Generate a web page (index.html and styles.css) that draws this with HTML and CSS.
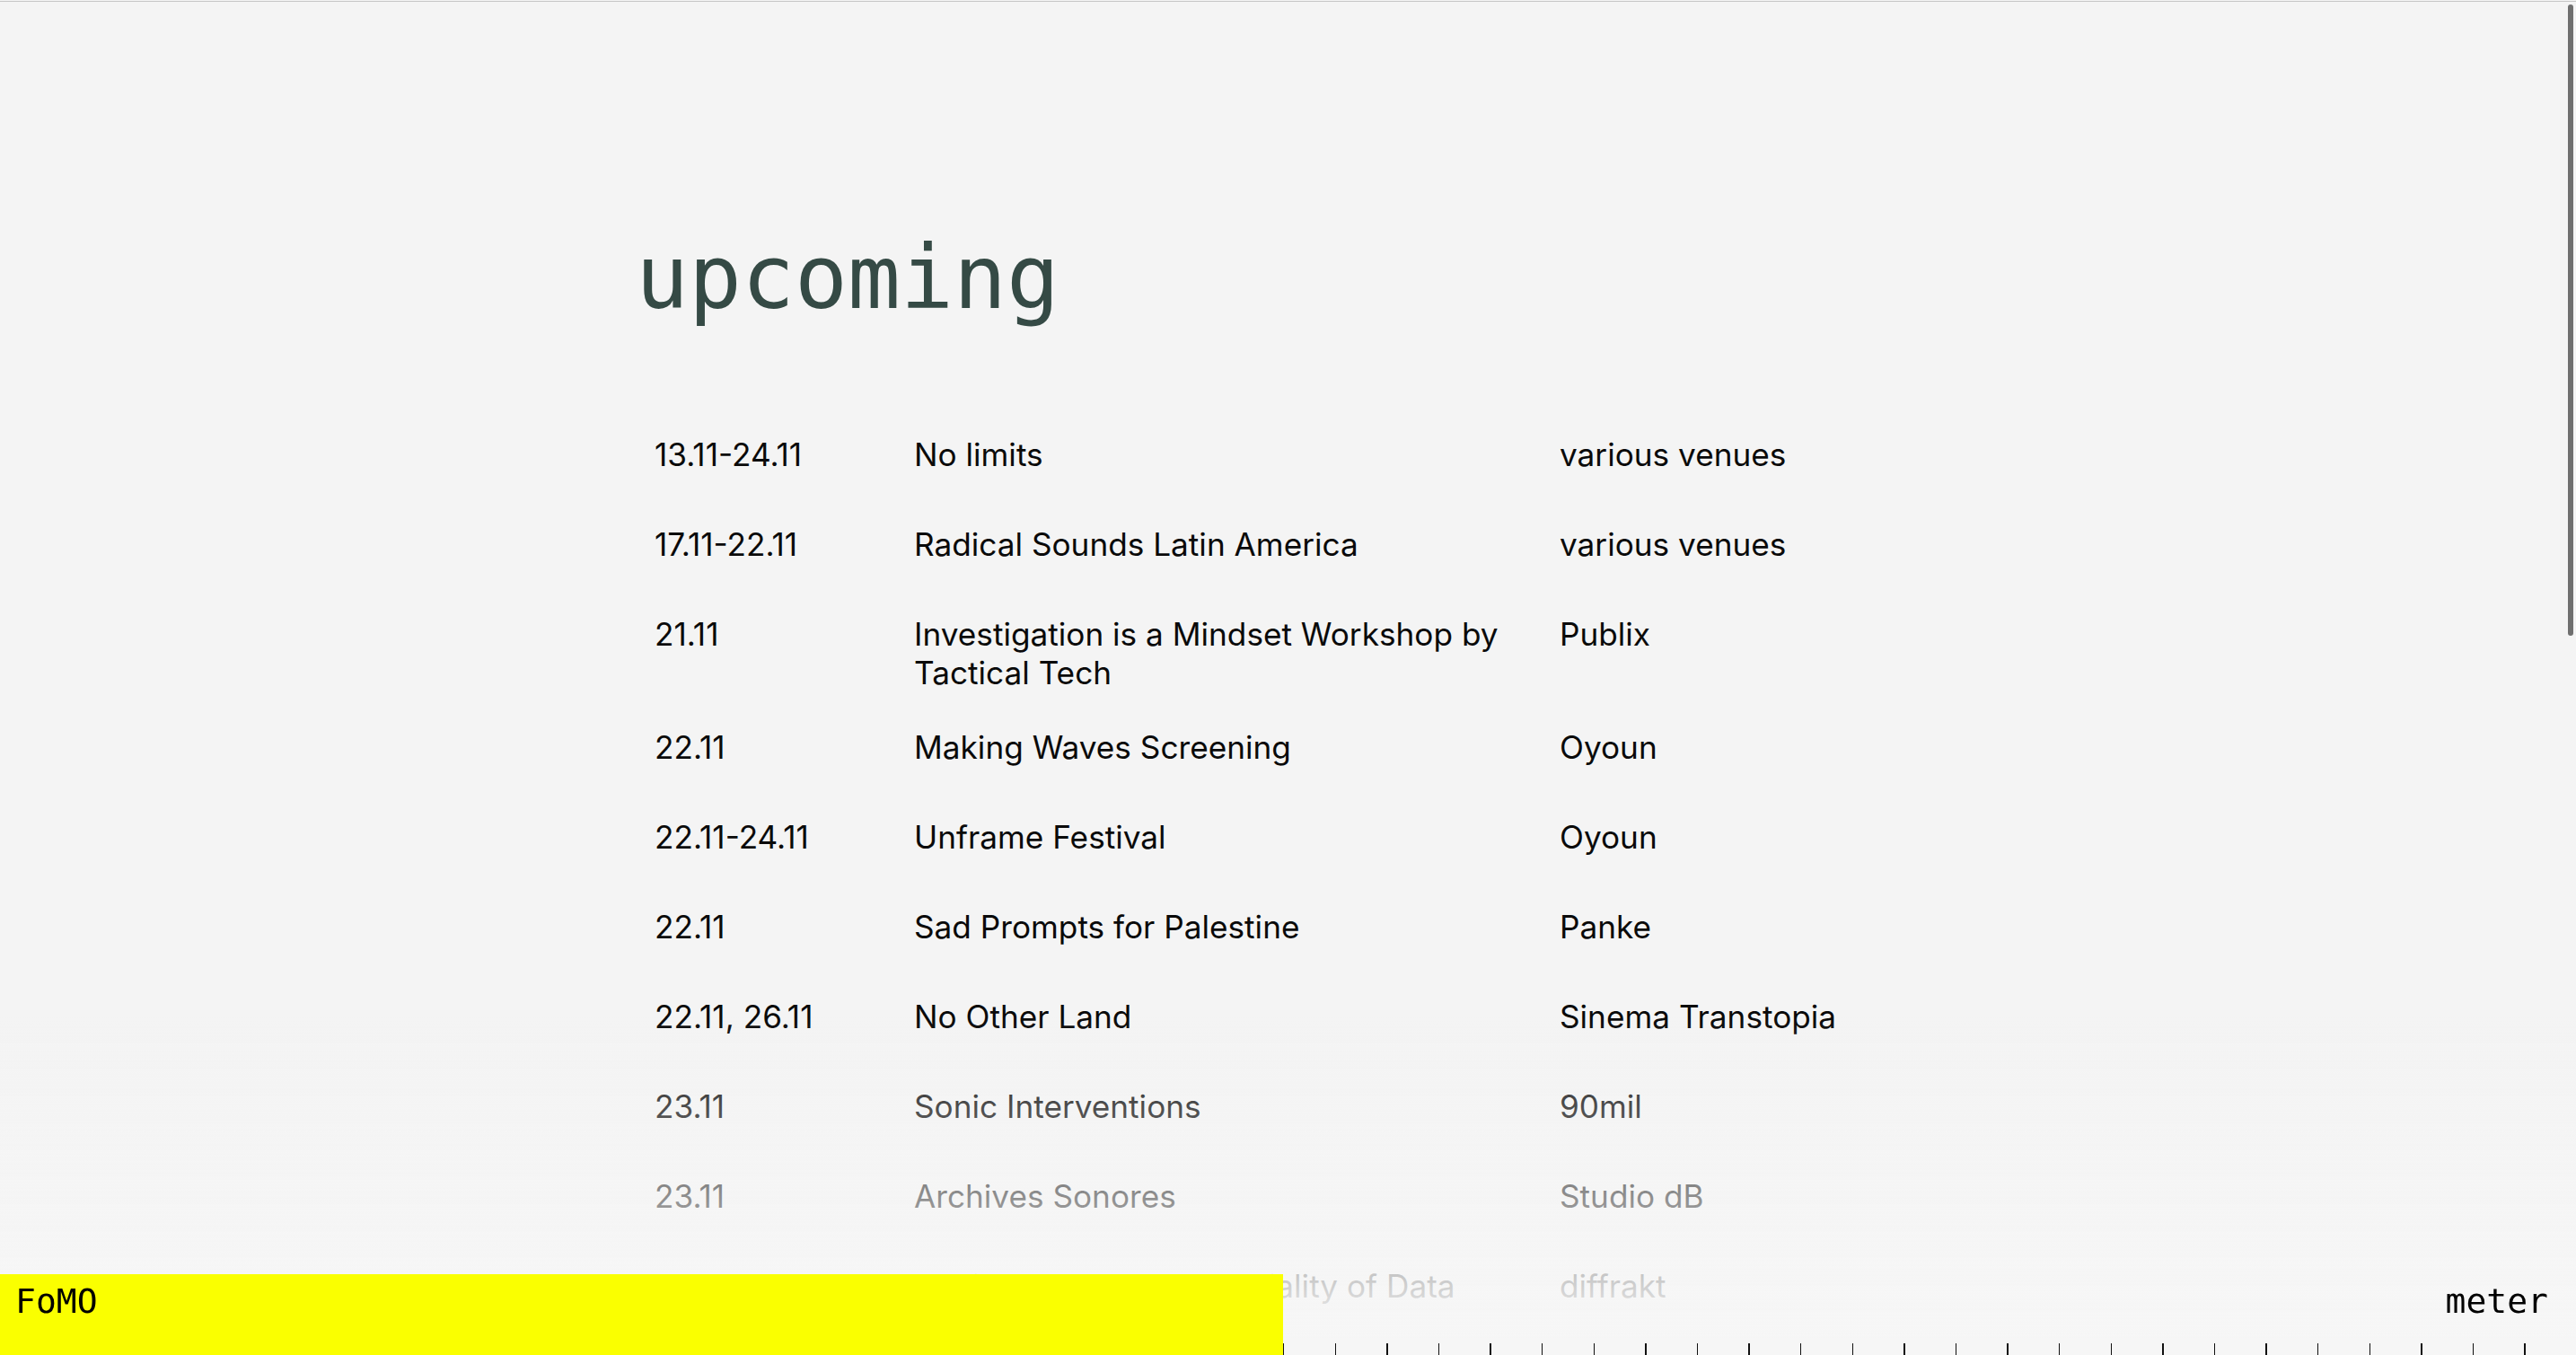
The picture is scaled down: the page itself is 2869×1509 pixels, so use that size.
FILE: index.html
```html
<!DOCTYPE html>
<html lang="en">
<head>
<meta charset="utf-8">
<title>upcoming</title>
<link rel="stylesheet" href="styles.css">
</head>
<body>
<div class="topline"></div>
<main class="wrap">
  <h1 class="title">upcoming</h1>
  <div class="events">
    <div class="event"><span class="date">13.11-24.11</span><span class="name">No limits</span><span class="venue">various venues</span></div>
    <div class="event"><span class="date">17.11-22.11</span><span class="name">Radical Sounds Latin America</span><span class="venue">various venues</span></div>
    <div class="event"><span class="date">21.11</span><span class="name">Investigation is a Mindset Workshop by Tactical Tech</span><span class="venue">Publix</span></div>
    <div class="event"><span class="date">22.11</span><span class="name">Making Waves Screening</span><span class="venue">Oyoun</span></div>
    <div class="event"><span class="date">22.11-24.11</span><span class="name">Unframe Festival</span><span class="venue">Oyoun</span></div>
    <div class="event"><span class="date">22.11</span><span class="name">Sad Prompts for Palestine</span><span class="venue">Panke</span></div>
    <div class="event"><span class="date">22.11, 26.11</span><span class="name">No Other Land</span><span class="venue">Sinema Transtopia</span></div>
    <div class="event"><span class="date">23.11</span><span class="name">Sonic Interventions</span><span class="venue">90mil</span></div>
    <div class="event"><span class="date">23.11</span><span class="name">Archives Sonores</span><span class="venue">Studio dB</span></div>
    <div class="event"><span class="date">24.11</span><span class="name">Sonic Traces and Materiality of Data</span><span class="venue">diffrakt</span></div>
  </div>
</main>
<div class="fade"></div>
<footer class="meter">
  <div class="meter-fill"><span class="label">FoMO</span></div>
  <div class="meter-rest"><span class="label">meter</span></div>
</footer>
<div class="scroll-thumb"></div>
</body>
</html>
```

FILE: styles.css
```css
html, body {
  margin: 0;
  height: 100%;
  overflow: hidden;
  background: #f4f4f4;
}

.topline {
  height: 1px;
  margin-top: 1px;
  background: #c6c6c6;
}

.wrap {
  width: 1453px;
  margin: 0 auto;
  padding-top: 258px;
}

.title {
  margin: 0;
  font-family: "DejaVu Sans Mono", monospace;
  font-weight: normal;
  font-size: 98px;
  line-height: 98px;
  color: #354a45;
}

.events {
  margin-top: 107px;
  padding-left: 21px;
}

.event {
  display: grid;
  grid-template-columns: 289px 719px 1fr;
  align-items: start;
  padding: 19.5px 0;
  min-height: 61px;
  font-family: Inter, "Noto Sans", sans-serif;
  font-size: 35.2px;
  line-height: 43.5px;
  color: #0a0a0a;
}

.name {
  padding-right: 38px;
}

.fade {
  position: fixed;
  left: 0;
  right: 0;
  bottom: 0;
  height: 378px;
  background: linear-gradient(to bottom, rgba(246, 246, 246, 0) 0, #f6f6f6 95%);
  pointer-events: none;
}

.meter {
  position: fixed;
  left: 0;
  right: 0;
  bottom: 0;
  height: 90px;
  display: flex;
  font-family: "DejaVu Sans Mono", monospace;
  font-size: 38px;
  line-height: 38px;
  color: #000;
}

.meter-fill {
  width: 1429px;
  box-sizing: border-box;
  padding: 10.8px 0 0 17px;
  background: #faff00;
}

.meter-rest {
  flex: 1;
  box-sizing: border-box;
  text-align: right;
  padding: 10.8px 31px 0 0;
  background: repeating-linear-gradient(90deg, #111 0, #111 1.5px, transparent 1.5px, transparent 57.6px) left bottom / 100% 13px no-repeat;
}

.scroll-thumb {
  position: fixed;
  top: 5px;
  right: 3px;
  width: 6px;
  height: 703px;
  border-radius: 3px;
  background: #6f6f6f;
}
```
